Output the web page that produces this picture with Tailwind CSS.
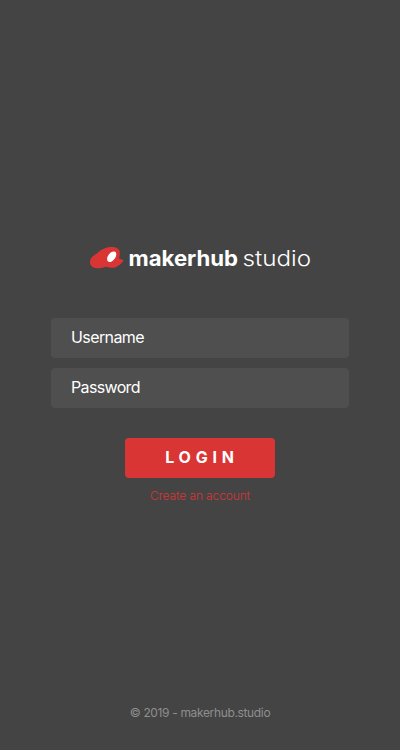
<!DOCTYPE html>
<html lang="en">
<head>
<meta charset="utf-8">
<meta name="viewport" content="width=device-width, initial-scale=1">
<title>makerhub studio</title>
<script src="https://cdn.jsdelivr.net/npm/@tailwindcss/browser@4"></script>
</head>
<body class="h-[750px] overflow-hidden bg-[#444444] font-['Inter',sans-serif] text-white">
<main class="flex h-full flex-col items-center pt-[238px]">
  <svg class="h-10 w-60 shrink-0" viewBox="80 238 240 40" role="img" aria-label="makerhub studio">
    <path fill="#d83534" d="M90 262.500C90 257.800 93.500 255.500 97.500 253C101 249.500 106 247 111.500 247C116.500 247 119.600 249 119.800 252.300C119.900 254.600 119.500 256.500 119 258.200L123.700 260.600C121.500 263.800 118.500 266.600 115 267.400C112 268.300 109 267.700 106 266.700C102.500 268.200 96.500 269.100 93 267.200C91 266.200 90 264.500 90 262.500Z"/>
    <ellipse cx="111.700" cy="256.700" rx="3.600" ry="6" transform="rotate(36 111.700 256.700)" fill="#fff"/>
    <text x="128.500" y="266" textLength="109.500" lengthAdjust="spacingAndGlyphs" fill="#fff" font-family="Inter, sans-serif" font-size="21" font-weight="700">makerhub</text>
    <text x="242.500" y="266" textLength="68.500" lengthAdjust="spacingAndGlyphs" fill="#fff" font-family="Inter, sans-serif" font-size="21" font-weight="300">studio</text>
  </svg>
  <form class="mt-10 flex flex-col items-center">
    <div class="flex h-10 w-[298px] items-center rounded bg-[#4f4f4f] px-5 pb-0.5 text-base tracking-[-0.6px]">Username</div>
    <div class="mt-2.5 flex h-10 w-[298px] items-center rounded bg-[#4f4f4f] px-5 pb-0.5 text-base tracking-[-0.65px]">Password</div>
    <button type="button" class="mt-[30px] h-10 w-[150px] rounded bg-[#d83534] pb-0.5 pl-1 text-base font-bold tracking-[4.8px]">LOGIN</button>
    <a class="mt-2.5 text-xs leading-4 font-light tracking-[-0.12px] text-[#d83534]">Create an account</a>
  </form>
  <footer class="mt-auto mb-[29px] text-xs leading-4 tracking-[-0.35px] text-[#8f8f8f]">© 2019 - makerhub.studio</footer>
</main>
</body>
</html>
